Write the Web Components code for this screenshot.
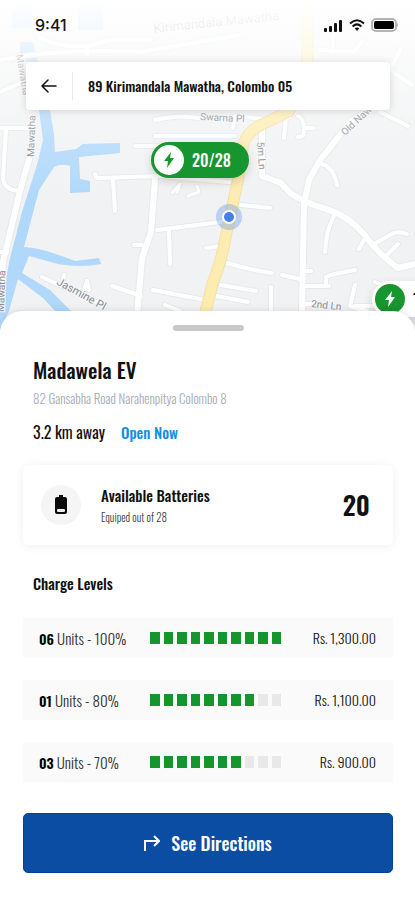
<!DOCTYPE html>
<html lang="en">
<head>
<meta charset="utf-8">
<meta name="viewport" content="width=device-width, initial-scale=1">
<title>Madawela EV</title>
<style>
body { margin: 0; background: #fff; color: #111; font-family: Oswald, "Roboto Condensed", "Liberation Sans", sans-serif; font-size: 15px; line-height: 20px; }
</style>
</head>
<body>
<ev-station-app></ev-station-app>

<template id="t-app">
<style>
:host { display: flex; flex-direction: column; min-height: 100vh; }
header { position: relative; display: flex; flex-direction: column; gap: 26px; min-height: 331px; box-sizing: border-box; padding: 14px 25px 0 26px; overflow: hidden; }
ev-sheet { flex: 1; margin-top: -20px; }
.levels { display: flex; flex-direction: column; gap: 22px; margin: 25px 0 31px; }
</style>
<header>
  <ev-map></ev-map>
  <ev-status-bar>9:41</ev-status-bar>
  <ev-address-bar>89 Kirimandala Mawatha, Colombo 05</ev-address-bar>
</header>
<ev-sheet>
  <ev-station-info>
    <span slot="name">Madawela EV</span>
    <span slot="address">82 Gansabha Road Narahenpitya Colombo 8</span>
    <span slot="distance">3.2 km away</span>
    <span slot="status">Open Now</span>
  </ev-station-info>
  <ev-battery-card>
    <span slot="title">Available Batteries</span>
    <span slot="note">Equiped out of 28</span>
    <span slot="count">20</span>
  </ev-battery-card>
  <ev-section-title>Charge Levels</ev-section-title>
  <div class="levels">
    <ev-charge-row count="06" percent="100">Rs. 1,300.00</ev-charge-row>
    <ev-charge-row count="01" percent="80">Rs. 1,100.00</ev-charge-row>
    <ev-charge-row count="03" percent="70">Rs. 900.00</ev-charge-row>
  </div>
  <ev-action-button>See Directions</ev-action-button>
</ev-sheet>
</template>

<template id="t-map">
<style>
:host { position: absolute; inset: 0; display: block; background: #f1f2f3; }
svg.map { display: block; width: 100%; height: 100%; }
.fade { position: absolute; inset: 0; background: linear-gradient(#fff 0, rgba(255,255,255,.88) 25px, rgba(255,255,255,.65) 60px, rgba(255,255,255,.25) 120px, rgba(255,255,255,0) 200px); }
.edge { fill: none; stroke: #e7e9eb; stroke-linecap: round; stroke-linejoin: round; }
.road { fill: none; stroke: #fff; stroke-linecap: round; stroke-linejoin: round; }
text { font: 400 10px Roboto, sans-serif; fill: #868b91; stroke: #f6f7f8; stroke-width: 2px; paint-order: stroke; }
ev-pin { position: absolute; }
.main { left: 151px; top: 142px; }
.side { left: 372px; top: 281px; }
.here { position: absolute; left: 217px; top: 205px; width: 10px; height: 10px; border: 2px solid #fff; border-radius: 50%; background: #4680ea; box-shadow: 0 0 0 6px rgba(105,150,235,.38); margin: 5px; }
</style>
<svg class="map" viewBox="0 0 415 331" preserveAspectRatio="xMinYMin slice" aria-hidden="true">
  <defs>
    <g id="minor">
      <path d="M0 128H30M6 129L3 178Q4 190 20 191M0 252H7M0 92L28 80M87 45V55M40 38Q60 48 88 46L110 40H150"/>
      <path d="M95 174Q96 179 101 178L160 176L240 183M113 180L115 211M157 230L213 223L232 220M169 230L170 264M134 245H142M112 286L141 296M153 290L205 300M165 305L180 311M42 277L62 286M62 286L64 275M83 294L87 281L89 290M62 286L105 306"/>
      <path d="M155 120Q180 114 198 118H222M155 136H235M135 146H160M233 128L235 116L275 120M206 248L221 246"/>
      <path d="M241 205L270 208M227 263Q250 270 272 273M282 275L300 279M221 285L256 291M216 296L248 302M271 287V312M302 271H311M302 286H329M326 286V277Q332 274 355 270M302 304H311M355 285L350 306L367 311M355 306H379"/>
      <path d="M322 164Q334 168 337 185M334 216Q326 230 325 252M366 236L359 249M374 244L390 235Q397 230 407 234M387 255L398 244"/>
      <path d="M284 138L286 118L290 117M298 116Q304 119 304 128M298 137Q305 138 304 128L314 128M380 112L408 126M400 50L390 70L412 85M320 50L354 52M333 35V52M354 52L362 42M365 10L405 0"/>
      <path d="M375 282L384 286M0 60Q60 48 140 52L240 35"/>
    </g>
    <path id="lanes" d="M172 193L180 184L177 192M188 196L199 192L197 186"/>
    <g id="major">
      <path d="M33 145L20 191L3 262L0 300M155 180L151 232L142 258L137 315M332 145L320 160L309 180L304 204L302 312"/>
      <path d="M332 145L350 122L370 110"/>
      <path d="M262 122V176L281 183L290 193Q305 203 326 209T364 234Q377 253 398 268L415 264"/>
    </g>
    <path id="trunk" d="M308 0L307 62Q305 92 288 112L263 124Q248 130 243 145L238 180L226 235Q222 260 213 282L204 318"/>
  </defs>
  <path fill="#b0d8fb" d="M12 0H32V28H12ZM78 0H103V30H78ZM20 42H33L38 62H20ZM39 110H50L54 135L55 152L76 149L83 144L120 143V153L79 157L80 179L90 181V192L70 193L70 166Q62 163 54 167L39 190L24 247L33 248Q50 251 75 261L99 258L101 264Q80 268 58 264L29 256L22 273L50 290L71 311H55L43 298L18 279L9 311L0 331V310L10 258L22 212L37 165L43 140Z"/>
  <use href="#minor" class="edge" stroke-width="6"/>
  <use href="#lanes" class="edge" stroke-width="5"/>
  <use href="#major" class="edge" stroke-width="8"/>
  <use href="#minor" class="road" stroke-width="4"/>
  <use href="#lanes" class="road" stroke-width="3"/>
  <use href="#major" class="road" stroke-width="6"/>
  <use href="#trunk" fill="none" stroke="#f3e0a5" stroke-width="12"/>
  <use href="#trunk" fill="none" stroke="#fdecb0" stroke-width="10"/>
  <text transform="translate(154 33) rotate(-6)" style="font-size:13px">Kirimandala Mawatha</text>
  <text transform="translate(200 120) rotate(3)">Swarna Pl</text>
  <text transform="translate(257 142) rotate(86)">5m Ln</text>
  <text transform="translate(345 136) rotate(-43)">Old Nawala</text>
  <text transform="translate(56 284) rotate(29)" style="font-size:11px">Jasmine Pl</text>
  <text transform="translate(311 307) rotate(6)">2nd Ln</text>
  <text transform="translate(16 55) rotate(80)">Mawatha</text>
  <text transform="translate(34 157) rotate(-88)">Mawatha</text>
  <text transform="translate(4 312) rotate(-88)">Mawatha</text>
</svg>
<div class="fade"></div>
<span class="here" role="img" aria-label="Your location"></span>
<ev-pin class="main">20/28</ev-pin>
<ev-pin class="side" light>18/28</ev-pin>
</template>

<template id="t-pin">
<style>
:host { display: flex; align-items: center; gap: 8px; box-sizing: border-box; height: 36px; padding: 0 18px 0 3px; border-radius: 18px; background: #17952f; color: #fff; font-size: 16px; font-weight: 500; white-space: nowrap; box-shadow: 0 4px 10px rgba(0,0,0,.15); }
i { display: grid; place-items: center; width: 30px; height: 30px; border-radius: 50%; background: #fff; color: #17952f; }
:host([light]) { background: #fff; color: #111; }
:host([light]) i { background: #17952f; color: #fff; }
</style>
<i><svg width="12" height="16" viewBox="0 0 12 16" aria-hidden="true"><path fill="currentColor" d="M8 0L1 9H5L4 16L11 6H7Z"/></svg></i>
<slot></slot>
</template>

<template id="t-status">
<style>
:host { position: relative; display: flex; align-items: center; justify-content: space-between; height: 22px; padding-left: 9px; margin-right: -9px; color: #161616; font: 500 16px/22px Inter, sans-serif; }
div { display: flex; align-items: center; gap: 6px; }
</style>
<slot></slot>
<div role="img" aria-label="Signal, Wi-Fi and battery">
  <svg width="20" height="13" viewBox="0 0 20 13"><g fill="#111"><rect x="1" y="9" width="3" height="4" rx="1"/><rect x="6" y="7" width="3" height="6" rx="1"/><rect x="11" y="4" width="3" height="9" rx="1"/><rect x="16" y="1" width="3" height="12" rx="1"/></g></svg>
  <svg width="16" height="12" viewBox="0 0 16 12" fill="none" stroke="#111" stroke-width="2"><path d="M1 4.5Q8-2 15 4.5M3.600 7.400Q8 3.400 12.400 7.400"/><path d="M5.700 9.300Q8 7.500 10.300 9.300L8 12Z" fill="#111" stroke="none"/></svg>
  <svg width="28" height="14" viewBox="0 0 28 14"><rect x="1" y="1" width="24" height="12" rx="4" fill="#fff" stroke="#b4b4b4" stroke-width="2"/><rect x="3" y="3" width="20" height="8" rx="2" fill="#000"/><path d="M26 5q2 2 0 4z" fill="#aaa"/></svg>
</div>
</template>

<template id="t-address">
<style>
:host { position: relative; display: flex; align-items: center; height: 48px; border-radius: 4px; background: #fff; box-shadow: 0 1px 8px rgba(0,0,0,.14); font-size: 14px; font-weight: 500; }
button { display: grid; place-items: center; width: 47px; height: 28px; padding: 0; border: 0; border-right: 1px solid #e9e9e9; background: none; color: #111; }
span { padding-left: 15px; }
</style>
<button type="button" aria-label="Back"><svg width="16" height="14" viewBox="0 0 16 14" fill="none" stroke="currentColor" stroke-width="1.500" stroke-linecap="round" stroke-linejoin="round"><path d="M15 7H1M7 1L1 7L7 13"/></svg></button>
<span><slot></slot></span>
</template>

<template id="t-sheet">
<style>
:host { position: relative; display: block; box-sizing: border-box; padding: 14px 22px 27px 23px; border-radius: 22px 22px 0 0; background: #fff; box-shadow: 0 -1px 6px rgba(0,0,0,.1); }
.handle { width: 71px; height: 6px; margin: 0 auto 25px; border-radius: 3px; background: #c8c8c8; }
</style>
<div class="handle"></div>
<slot></slot>
</template>

<template id="t-info">
<style>
:host { display: block; padding: 0 10px; }
h1 { margin: 0; font-size: 21px; line-height: 28px; font-weight: 500; }
p { margin: 4px 0 0; color: #a9a9b5; font-size: 13px; font-weight: 300; }
.meta { display: flex; gap: 16px; margin-top: 14px; }
.distance { font-size: 16px; }
.status { color: #118fe0; font-weight: 500; }
</style>
<h1><slot name="name"></slot></h1>
<p><slot name="address"></slot></p>
<div class="meta"><span class="distance"><slot name="distance"></slot></span><span class="status"><slot name="status"></slot></span></div>
</template>

<template id="t-card">
<style>
:host { display: flex; align-items: center; height: 80px; box-sizing: border-box; margin: 23px 0 28px; padding: 0 23px 0 18px; border-radius: 6px; background: #fff; box-shadow: 0 1px 12px rgba(0,0,0,.06); }
i { display: grid; place-items: center; width: 40px; height: 40px; margin-right: 20px; border-radius: 50%; background: #f5f5f5; }
div { flex: 1; }
h2 { margin: 0; font-size: 15px; line-height: 24px; font-weight: 500; }
p { margin: 0; color: #444; font-size: 11px; font-weight: 300; }
strong { font-size: 26px; line-height: 32px; font-weight: 600; }
</style>
<i><svg width="12" height="20" viewBox="0 0 12 20" aria-hidden="true"><path d="M4 0H8V2H10Q12 2 12 4V17Q12 19 10 19H2Q0 19 0 17V4Q0 2 2 2H4Z" fill="#0a0a0a"/><rect x="2" y="14" width="8" height="3" rx="1" fill="#eee"/></svg></i>
<div><h2><slot name="title"></slot></h2><p><slot name="note"></slot></p></div>
<strong><slot name="count"></slot></strong>
</template>

<template id="t-title">
<style>
:host { display: block; padding: 0 10px; }
h2 { margin: 0; font-size: 15px; line-height: 20px; font-weight: 500; }
</style>
<h2><slot></slot></h2>
</template>

<template id="t-row">
<style>
:host { display: grid; grid-template-columns: 111px 131px 1fr; align-items: center; height: 40px; padding: 0 17px 0 16px; background: #fafafa; font-size: 15px; font-weight: 300; white-space: nowrap; }
.units { color: #333; }
b { color: #000; font-weight: 600; font-size: 14px; }
.bar { display: grid; grid-template-columns: repeat(10, 1fr); gap: 4px; height: 12px; }
.bar i { background: #e8e8e8; }
.bar i.on { background: #15952e; }
.price { text-align: right; color: #111; font-size: 14px; }
</style>
<span class="units"><b></b> Units - <span class="percent"></span></span>
<div class="bar" role="img"></div>
<span class="price"><slot></slot></span>
</template>

<template id="t-action">
<style>
:host { display: block; }
button { display: flex; align-items: center; justify-content: center; gap: 11px; width: 100%; height: 60px; padding: 0; border: 1px solid #07409a; border-radius: 5px; background: #0b4da2; color: #fff; font: inherit; font-size: 18px; line-height: 24px; font-weight: 500; }
</style>
<button type="button"><svg width="16" height="16" viewBox="0 0 16 16" fill="none" stroke="currentColor" stroke-width="2" aria-hidden="true"><path d="M1 16V6H14M10 1L15 6L10 11"/></svg><slot></slot></button>
</template>

<script>
class EvElement extends HTMLElement {
  constructor() {
    super();
    const template = document.getElementById(this.constructor.template);
    this.attachShadow({ mode: "open" }).append(template.content.cloneNode(true));
  }
}
const define = (name, template) =>
  customElements.define(name, class extends EvElement { static template = template; });

class EvChargeRow extends EvElement {
  static template = "t-row";
  connectedCallback() {
    const percent = Number(this.getAttribute("percent"));
    const root = this.shadowRoot;
    root.querySelector("b").textContent = this.getAttribute("count");
    root.querySelector(".percent").textContent = percent + "%";
    const bar = root.querySelector(".bar");
    bar.setAttribute("aria-label", percent + "% charged");
    bar.replaceChildren(...Array.from({ length: 10 }, (_, n) => {
      const cell = document.createElement("i");
      cell.classList.toggle("on", n < percent / 10);
      return cell;
    }));
  }
}
define("ev-pin", "t-pin");
define("ev-map", "t-map");
define("ev-status-bar", "t-status");
define("ev-address-bar", "t-address");
define("ev-sheet", "t-sheet");
define("ev-station-info", "t-info");
define("ev-battery-card", "t-card");
define("ev-section-title", "t-title");
customElements.define("ev-charge-row", EvChargeRow);
define("ev-action-button", "t-action");
define("ev-station-app", "t-app");
</script>
</body>
</html>
